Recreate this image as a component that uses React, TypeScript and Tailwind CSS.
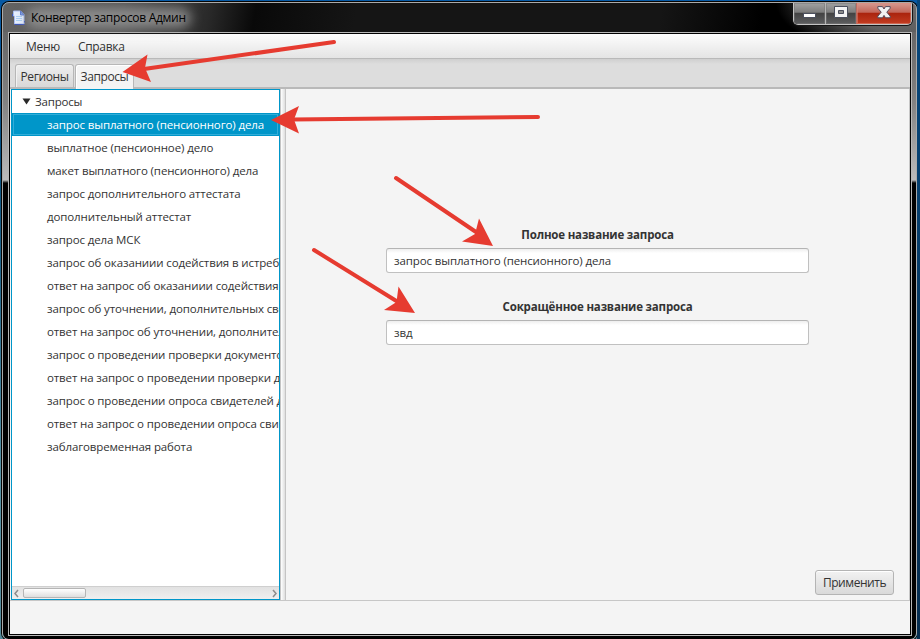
import React from "react";

const requests = [
  "запрос выплатного (пенсионного) дела",
  "выплатное (пенсионное) дело",
  "макет выплатного (пенсионного) дела",
  "запрос дополнительного аттестата",
  "дополнительный аттестат",
  "запрос дела МСК",
  "запрос об оказаниии содействия в истреб",
  "ответ на запрос об оказаниии содействия",
  "запрос об уточнении, дополнительных све",
  "ответ на запрос об уточнении, дополнител",
  "запрос о проведении проверки документо",
  "ответ на запрос о проведении проверки д",
  "запрос о проведении опроса свидетелей д",
  "ответ на запрос о проведении опроса сви",
  "заблаговременная работа",
];

function DocumentIcon() {
  return (
    <svg width="14" height="16" viewBox="0 0 14 16" className="shrink-0">
      <path d="M1.500 1h7l3.500 3.500V14H2.500V6h-1z" fill="#e6effd" stroke="#a9bdf0" strokeWidth="1" />
      <path d="M8.500 1v4H12z" fill="#7f9fe6" stroke="#5b7bd0" strokeWidth="1" />
      <path d="M4 6.500h6M4 8.500h6M4 10.500h6" stroke="#a9d0f7" />
      <path d="M.5 4v2.500M12.500 11v1.500" stroke="#3c55b8" />
      <path d="M2.500 14.500h10" stroke="#3c55b8" />
    </svg>
  );
}

function TitleBar() {
  return (
    <div className="flex h-[29px] shrink-0 items-start justify-between">
      <div className="flex h-[30px] items-center pl-[9px]">
        <DocumentIcon />
        <div className="relative ml-[5px]">
          <div className="absolute -inset-x-[5px] -top-px -bottom-px rounded-full bg-[#9a9a9a]/80 blur-[6px]" />
          <span className="relative block whitespace-nowrap text-[12px] leading-[18px] tracking-[-0.3px] text-black">
            Конвертер запросов Админ
          </span>
        </div>
      </div>
      <div className="mr-[4px] flex h-[22px] overflow-hidden rounded-b-[5px] border border-t-0 border-[#c4c4c4] shadow-[0_0_0_1px_#151515]">
        <div className="flex w-[32px] justify-center border-r border-[#b5b5b5] bg-[linear-gradient(#a2a2a2_0%,#7c7c7c_45%,#414141_46%,#5d5e60_100%)] shadow-[inset_0_0_0_1px_#77777788]">
          <div className="mt-[10px] h-[5px] w-[13px] border border-[#4b4f5d] bg-white" />
        </div>
        <div className="flex w-[31px] justify-center border-r border-[#bb6b61] bg-[linear-gradient(#a2a2a2_0%,#7c7c7c_45%,#414141_46%,#5d5e60_100%)] shadow-[inset_0_0_0_1px_#77777788]">
          <svg width="14" height="12" className="mt-[3px]">
            <path d="M.5.5h13v11H.5z" fill="#f4f4f4" stroke="#4b4f5d" />
            <path d="M4.500 4.500h5v3h-5z" fill="#8b8b8b" stroke="#4b4f5d" />
          </svg>
        </div>
        <div className="flex w-[54px] justify-center bg-[linear-gradient(#d59a90_0%,#c26659_45%,#a9220c_46%,#c33d22_100%)] shadow-[inset_0_0_0_1px_#dd8b7a88]">
          <svg width="14" height="13" className="mt-[3px]">
            <path
              d="M.8.6h4.700L7 3 8.500.6h4.700v1.600L9.800 6.200l3.400 4v1.600H8.500L7 9.400l-1.500 2.400H.8v-1.600l3.400-4L.8 2.200z"
              fill="#f2f2f2"
              stroke="#51495a"
            />
          </svg>
        </div>
      </div>
    </div>
  );
}

function RequestTree() {
  return (
    <div className="flex w-[269px] shrink-0 flex-col border border-[#0096c9] bg-white">
      <div className="flex h-[23px] shrink-0 items-center pl-[10px]">
        <svg width="9" height="7">
          <path d="M.5.5h8l-4 6z" fill="#292929" />
        </svg>
        <span className="ml-[4px] tracking-[-0.2px]">Запросы</span>
      </div>
      <div className="flex-1 overflow-hidden">
        {requests.map((name, index) => (
          <div
            key={name}
            className={
              index === 0
                ? "flex h-[23px] items-center whitespace-nowrap bg-[#0096c9] pl-[35px] text-white shadow-[inset_0_0_0_1px_#0096c9,inset_0_0_0_2px_#31add8]"
                : "flex h-[23px] items-center whitespace-nowrap pl-[35px]"
            }
          >
            {name}
          </div>
        ))}
      </div>
      <div className="flex h-[13px] shrink-0 items-center border-t border-[#cfcfcf] bg-[linear-gradient(#e2e2e2,#efefef)]">
        <svg width="11" height="11" className="shrink-0">
          <path d="M6 2L3 5.500 6 9" fill="none" stroke="#8c8c8c" strokeWidth="1.500" />
        </svg>
        <div className="h-[10px] w-[63px] rounded-[2px] border border-[#b5b5b5] bg-[linear-gradient(#fff,#dedede)]" />
        <svg width="11" height="11" className="ml-auto shrink-0">
          <path d="M5 2l3 3.500L5 9" fill="none" stroke="#8c8c8c" strokeWidth="1.500" />
        </svg>
      </div>
    </div>
  );
}

function Field({ label, value }: { label: string; value: string }) {
  return (
    <label className="flex h-[72px] flex-col items-center">
      <span className="flex h-[27px] items-center font-bold leading-[18px] tracking-[-0.18px]">{label}</span>
      <input
        readOnly
        value={value}
        className="h-[25px] w-[423px] rounded-[3px] border border-[#c0c0c0] border-t-[#b4b4b4] bg-[linear-gradient(#eee_0,#fff_4px)] px-[7px] tracking-[-0.12px] outline-none"
      />
    </label>
  );
}

function Arrows() {
  return (
    <svg width="920" height="639" className="pointer-events-none absolute inset-0">
      <g stroke="#e63b30" strokeWidth="4" strokeLinecap="round" fill="#e63b30">
        <path d="M334 42L144 69M538 117L292 119.500M396 178L476 232M314 250L398 302" />
        <g stroke="none">
          <path d="M122.500 72l25-17.500-2.500 13.500 6 14z" />
          <path d="M271 120l28-14-5 13.500 5 14z" />
          <path d="M493 246l-31-4.500 13-7.500 4-15.500z" />
          <path d="M415 313l-31-3 12.500-8 2-15.500z" />
        </g>
      </g>
    </svg>
  );
}

export default function App() {
  return (
    <div className="relative h-[639px] w-[920px] overflow-hidden bg-[linear-gradient(#0659a5,#075181_25%,#5794a7_75%,#528a9b)] font-['Open_Sans','Noto_Sans',sans-serif] text-[11.5px] leading-[18px] tracking-[-0.12px] text-[#333]">
      <div className="flex h-[640px] justify-between pl-[2px]">
        <div className="flex h-[638px] w-[915px] flex-col self-end overflow-hidden rounded-[7px] border border-[#aaa] bg-[radial-gradient(ellipse_140px_55px_at_100%_0,#696969_0,#5f5f5f_55%,transparent_100%),linear-gradient(100deg,#636363_0,#555_120px,#292929_205px,#090909_250px,#151515_350px,#151515_650px,#000_750px)] bg-[length:100%_31px] bg-no-repeat shadow-[0_0_0_1px_#050505]">
          <TitleBar />
          <div className="flex min-h-0 flex-1 bg-[linear-gradient(#666_0,#828282_70px,#bbb_148px,#000_151px)] px-[5px] pb-[3px]">
            <div className="flex w-[904px] shrink-0 flex-col border border-[#b8b8b8] bg-black px-px">
              <main className="mb-px mt-px flex min-h-0 flex-1 flex-col bg-[#f4f4f4]">
                <nav className="flex h-[25px] shrink-0 items-center gap-[18px] border-b border-[#b9b9b9] bg-[linear-gradient(#fdfdfd,#e4e4e4)] pl-[16px] pt-[2px] text-[12px] tracking-[-0.3px]">
                  <span>Меню</span>
                  <span>Справка</span>
                </nav>
                <div className="flex h-[30px] shrink-0 items-end gap-px border-b-2 border-[#b9b9b9] bg-[linear-gradient(#cfcfcf_0,#ddd_5px)] pl-[5px] text-[12px] tracking-[-0.4px]">
                  <div className="flex h-[23px] w-[59px] items-center justify-center rounded-t-[3px] border border-b-0 border-[#b7b7b7] bg-[linear-gradient(#eee,#d8d8d8)] pt-px shadow-[inset_1px_1px_#f2f2f2]">
                    Регионы
                  </div>
                  <div className="-mb-[2px] flex h-[25px] w-[59px] items-center justify-center rounded-t-[3px] border border-b-0 border-[#b7b7b7] bg-[#f4f4f4] pb-px shadow-[inset_1px_1px_white]">
                    Запросы
                  </div>
                </div>
                <div className="flex min-h-0 flex-1 border-b border-r border-[#c7c7c7] pl-px">
                  <RequestTree />
                  <div className="w-[6px] shrink-0 border-x border-[#c4c4c4] bg-[linear-gradient(90deg,#fff,#dedede)]" />
                  <section className="flex flex-1 flex-col justify-between pt-[132px]">
                    <div className="flex flex-col items-center">
                      <Field label="Полное название запроса" value="запрос выплатного (пенсионного) дела" />
                      <Field label="Сокращённое название запроса" value="звд" />
                    </div>
                    <button className="mb-[5px] mr-[15px] h-[25px] w-[79px] self-end rounded-[3px] border border-[#b4b4b4] bg-[linear-gradient(#f2f2f2,#d9d9d9)] text-[12px] tracking-[-0.45px] shadow-[inset_0_1px_white]">
                      Применить
                    </button>
                  </section>
                </div>
                <footer className="h-[33px] shrink-0" />
              </main>
            </div>
          </div>
        </div>
        <div className="w-[3px] bg-[linear-gradient(#06477c,#052d50)]" />
      </div>
      <Arrows />
    </div>
  );
}
